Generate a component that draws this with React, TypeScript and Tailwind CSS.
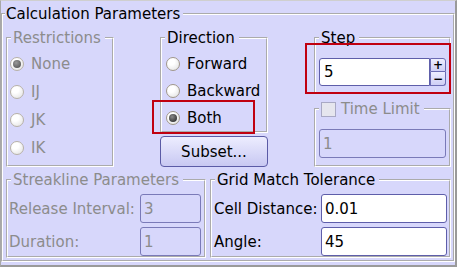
const groove = "[border:2px_groove_white]";

const Radio = ({ checked, disabled }: { checked?: boolean; disabled?: boolean }) => (
  <span
    className={
      "w-[14px] h-[14px] shrink-0 rounded-full border flex items-center justify-center bg-[radial-gradient(circle_at_35%_30%,#ffffff_30%,#dedede)] " +
      (disabled ? "border-[#b8b2a8]" : "border-[#a0978a]")
    }
  >
    {checked && (
      <span
        className={
          "w-[8px] h-[8px] rounded-full " +
          (disabled
            ? "bg-[radial-gradient(circle_at_40%_35%,#9a9a9a,#4a4a4a)]"
            : "bg-[radial-gradient(circle_at_40%_35%,#8a8a8a,#1e1e1e)]")
        }
      />
    )}
  </span>
);

const RadioRow = ({ label, checked, disabled, h }: { label: string; checked?: boolean; disabled?: boolean; h: string }) => (
  <div className={"flex items-center gap-[7px] " + h}>
    <Radio checked={checked} disabled={disabled} />
    <span className={disabled ? "text-[#8c8c8c]" : "text-black"}>{label}</span>
  </div>
);

const Field = ({ value, disabled, w }: { value: string; disabled?: boolean; w: string }) => (
  <div
    className={
      "h-[29px] flex items-center pl-[3px] rounded-[3px] border " +
      w +
      (disabled ? " border-[#7a7ab8] bg-transparent text-[#8c8c8c]" : " border-[#5e5eaa] bg-white text-black")
    }
  >
    {value}
  </div>
);

const Legend = ({ children, gray }: { children: React.ReactNode; gray?: boolean }) => (
  <legend className={"ml-[3px] pl-[2px] pr-[4px] leading-[18px] " + (gray ? "text-[#8c8c8c]" : "text-black")}>
    {children}
  </legend>
);

export default function App() {
  return (
    <div className="w-[457px] h-[267px] bg-[#d7d7fb] border-t border-t-[#cfcfcf] border-l border-l-[#a8a8a8] border-r-2 border-r-[#9a9a9a] border-b-2 border-b-[#9a9a9a] pt-[4px] font-['DejaVu_Sans',sans-serif] text-[15px] leading-[18px] text-black">
      <fieldset className={groove + " h-[257px]"}>
        <legend className="ml-[2px] pl-[1px] pr-[3px] leading-[18px]">Calculation Parameters</legend>
        <div className="pt-[6px] pl-[3px] pr-[2px]">
          <div className="relative flex gap-[46px] h-[138px]">
            <fieldset className={groove + " w-[108px] h-[138px]"}>
              <Legend gray>Restrictions</Legend>
              <div className="pt-[3px] pl-[2px]">
                <RadioRow label="None" checked disabled h="h-[28px]" />
                <RadioRow label="IJ" disabled h="h-[28px]" />
                <RadioRow label="JK" disabled h="h-[28px]" />
                <RadioRow label="IK" disabled h="h-[28px]" />
              </div>
            </fieldset>

            <div className="w-[108px] flex flex-col gap-[3px]">
              <fieldset className={groove + " h-[104px]"}>
                <Legend>Direction</Legend>
                <div className="pt-[3px] pl-[4px]">
                  <RadioRow label="Forward" h="h-[27px]" />
                  <RadioRow label="Backward" h="h-[27px]" />
                  <RadioRow label="Both" checked h="h-[27px]" />
                </div>
              </fieldset>
              <button className="h-[31px] w-full rounded-[4px] border border-[#5b5ba6] bg-linear-to-b from-[#ededff] to-[#c8c8f2] text-black leading-[18px]">
                Subset...
              </button>
            </div>

            <div className="w-[137px] flex flex-col gap-[6px]">
              <fieldset className={groove + " h-[65px]"}>
                <Legend>Step</Legend>
                <div className="pt-[11px] pl-[3px] pr-[3px] flex">
                  <div className="flex-1 h-[28px] flex items-center pl-[4px] bg-white border border-[#5e5eaa] rounded-l-[3px]">5</div>
                  <div className="w-[16px] flex flex-col">
                    <div className="h-[14px] flex items-center justify-center rounded-tr-[3px] border border-[#6c6cb4] bg-linear-to-b from-[#eeeeff] to-[#cfcff5] text-[12px] leading-none font-bold">+</div>
                    <div className="h-[14px] flex items-center justify-center rounded-br-[3px] border border-t-0 border-[#6c6cb4] bg-linear-to-b from-[#eeeeff] to-[#cfcff5] text-[12px] leading-none font-bold">−</div>
                  </div>
                </div>
              </fieldset>
              <fieldset className={groove + " h-[67px]"}>
                <legend className="ml-[3px] pl-[2px] pr-[4px] leading-[18px] flex items-center gap-[5px] text-[#8c8c8c]">
                  <span className="w-[15px] h-[15px] border border-[#a9a9c4] bg-[#e6e6ee]" />
                  Time Limit
                </legend>
                <div className="pt-[11px] pl-[3px] pr-[3px]">
                  <Field value="1" disabled w="w-full h-[28px]" />
                </div>
              </fieldset>
            </div>

            <span className="absolute left-[146px] top-[71px] w-[103px] h-[34px] border-2 border-[#c00010]" />
            <span className="absolute left-[299px] top-[14px] w-[146px] h-[51px] border-2 border-[#c00010]" />
          </div>

          <div className="flex gap-[4px] h-[87px] mt-[4px]">
            <fieldset className={groove + " w-[200px]"}>
              <Legend gray>Streakline Parameters</Legend>
              <div className="pt-[5px] pl-[1px] pr-[3px] flex flex-col gap-[4px] text-[#8c8c8c]">
                <div className="flex items-center justify-between">
                  <span>Release Interval:</span>
                  <Field value="3" disabled w="w-[61px]" />
                </div>
                <div className="flex items-center justify-between">
                  <span>Duration:</span>
                  <Field value="1" disabled w="w-[61px]" />
                </div>
              </div>
            </fieldset>
            <fieldset className={groove + " flex-1"}>
              <Legend>Grid Match Tolerance</Legend>
              <div className="pt-[5px] pl-[2px] pr-[2px] flex flex-col gap-[4px]">
                <div className="flex items-center justify-between">
                  <span>Cell Distance:</span>
                  <Field value="0.01" w="w-[126px]" />
                </div>
                <div className="flex items-center justify-between">
                  <span>Angle:</span>
                  <Field value="45" w="w-[126px]" />
                </div>
              </div>
            </fieldset>
          </div>
        </div>
      </fieldset>
    </div>
  );
}
